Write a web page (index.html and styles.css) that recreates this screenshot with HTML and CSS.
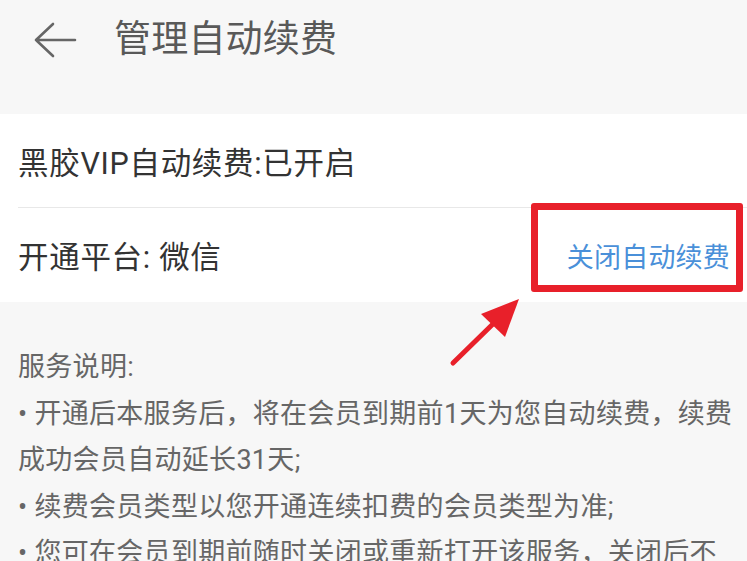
FILE: index.html
```html
<!DOCTYPE html>
<html lang="zh-CN">
<head>
<meta charset="utf-8">
<link rel="stylesheet" href="styles.css">
</head>
<body>
<div class="page">
  <header class="toolbar">
    <svg class="back" width="44" height="36" viewBox="0 0 44 36">
      <path d="M20 2 L3 18 L20 34 M3 18 L42 18" fill="none" stroke="#666" stroke-width="2.6" stroke-linecap="round" stroke-linejoin="round"/>
    </svg>
    <h1 class="title">管理自动续费</h1>
  </header>
  <section class="card">
    <div class="row row-divider"><span class="row-text">黑胶VIP自动续费:已开启</span></div>
    <div class="row"><span class="row-text">开通平台: 微信</span><span class="link">关闭自动续费</span></div>
  </section>
  <section class="desc">
    <p>服务说明:</p>
    <p>• 开通后本服务后，将在会员到期前1天为您自动续费，续费<br>成功会员自动延长31天;</p>
    <p>• 续费会员类型以您开通连续扣费的会员类型为准;</p>
    <p>• 您可在会员到期前随时关闭或重新打开该服务，关闭后不</p>
  </section>
  <div class="highlight"></div>
  <svg class="pointer" width="747" height="561" viewBox="0 0 747 561">
    <path d="M453 363 L496 321" stroke="#e8202a" stroke-width="5" stroke-linecap="round" fill="none"/>
    <polygon points="519,299 481,314 505,337" fill="#e8202a"/>
  </svg>
</div>
</body>
</html>
```

FILE: styles.css
```css
html, body {
  margin: 0;
  padding: 0;
  background: #f7f7f7;
}
body {
  width: 747px;
  height: 561px;
  overflow: hidden;
  font-family: Roboto, "Noto Sans CJK SC", sans-serif;
}
.page {
  position: relative;
  width: 747px;
  height: 561px;
  overflow: hidden;
}
.toolbar {
  height: 78px;
  display: flex;
  align-items: center;
  padding-left: 33px;
  margin-bottom: 36px;
}
.back {
  display: block;
  margin-top: 1px;
}
.title {
  margin: 0 0 0 37px;
  font-size: 37px;
  font-weight: 400;
  color: #595959;
  line-height: 1;
  letter-spacing: 0.2px;
}
.card {
  background: #fff;
}
.row {
  height: 94px;
  margin-left: 18px;
  padding-right: 17px;
  display: flex;
  align-items: center;
  justify-content: space-between;
}
.row-divider {
  border-bottom: 1px solid #e8e8e8;
  height: 93px;
}
.row-text {
  font-size: 30.5px;
  color: #333;
  letter-spacing: 0.7px;
}
.link {
  font-size: 27px;
  color: #4a90d9;
  letter-spacing: 0.2px;
}
.desc {
  padding: 42px 18px 0 18px;
  color: #666;
  font-size: 27px;
  line-height: 46.5px;
  letter-spacing: 0.3px;
}
.desc p {
  margin: 0;
  white-space: nowrap;
}
.highlight {
  position: absolute;
  left: 531px;
  top: 203px;
  width: 212px;
  height: 89px;
  box-sizing: border-box;
  border: 7px solid #e8202a;
  border-radius: 3px;
}
.pointer {
  position: absolute;
  left: 0;
  top: 0;
  pointer-events: none;
}
```
